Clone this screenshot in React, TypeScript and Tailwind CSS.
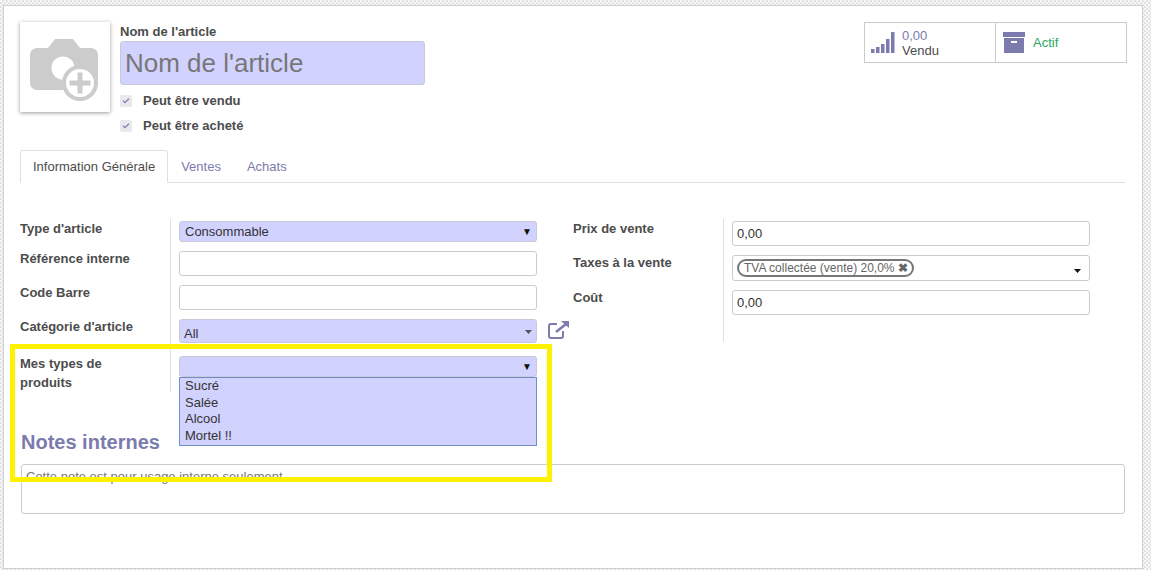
import { Check } from 'lucide-react'

const font = { fontFamily: '"Liberation Sans", Arial, sans-serif' }

function Caret({ color = '#000' }: { color?: string }) {
    return (
        <svg width="7" height="4" viewBox="0 0 7 4" className="shrink-0 block">
            <path d="M0 0h7L3.5 4z" fill={color} />
        </svg>
    )
}

function NativeSelect({ text, h }: { text?: string; h: string }) {
    return (
        <div className={`${h} w-[358px] flex items-center justify-between bg-[#d2d2ff] border border-[#c8c8d8] rounded-[3px] pl-[5px] pr-[4px] text-[#333]`}>
            <span>{text}</span>
            <span className="text-[10px] leading-none text-[#111]">▼</span>
        </div>
    )
}

function TextField({ value, h, w = 'w-[358px]' }: { value?: string; h: string; w?: string }) {
    return (
        <div className={`${h} ${w} flex items-center bg-white border border-[#ccc] rounded-[3px] px-[4px] text-[#333]`}>
            {value}
        </div>
    )
}

function FieldLabel({ children, width = 'w-[150px]' }: { children: React.ReactNode; width?: string }) {
    return <div className={`${width} shrink-0 font-bold text-[#4c4c4c] leading-[19px]`}>{children}</div>
}

function CheckRow({ label }: { label: string }) {
    return (
        <div className="h-[25px] flex items-center">
            <span className="w-[12px] h-[12px] rounded-[2px] bg-[#e7e9ed] flex items-center justify-center">
                <Check size={8} strokeWidth={3.5} color="#7c7bad" />
            </span>
            <span className="ml-[11px] font-bold text-[#4c4c4c]">{label}</span>
        </div>
    )
}

export default function App() {
    return (
        <div className="relative w-[1151px] h-[570px] overflow-hidden pt-[5px] pl-[3px] text-[13px] bg-[repeating-conic-gradient(#e2e2e2_0_25%,#f7f7f7_0_50%)] bg-[length:4px_4px]" style={font}>
            <div className="w-[1140px] h-[564px] bg-white border border-[#cfcfd8] pt-[16px] pl-[16px] pr-[15px]">
                {/* header */}
                <div className="flex items-start h-[116px]">
                    <div className="w-[90px] h-[90px] bg-white shadow-[0_1px_4px_rgba(0,0,0,0.4)] flex items-center justify-center">
                        <svg width="70" height="66" viewBox="0 0 70 66" className="overflow-visible">
                            <path d="M7 14h11l7-9h18l7 9h11a7 7 0 0 1 7 7v28a7 7 0 0 1-7 7H7a7 7 0 0 1-7-7V21a7 7 0 0 1 7-7z" fill="#ccc" />
                            <circle cx="33" cy="34" r="11.5" fill="#fff" />
                            <circle cx="50" cy="49" r="18" fill="#ccc" />
                            <circle cx="50" cy="49" r="14" fill="#fff" />
                            <path d="M47.5 38.5h5v8h8v5h-8v8h-5v-8h-8v-5h8z" fill="#ccc" />
                        </svg>
                    </div>
                    <div className="ml-[10px] w-[305px]">
                        <div className="font-bold text-[#4c4c4c] leading-[19px]">Nom de l'article</div>
                        <div className="h-[44px] flex items-center bg-[#d2d2ff] border border-[#c8c8d8] rounded-[3px] px-[4px] text-[26px] text-[#777]">Nom de l'article</div>
                        <div className="mt-[3px]">
                            <CheckRow label="Peut être vendu" />
                            <CheckRow label="Peut être acheté" />
                        </div>
                    </div>
                    <div className="ml-auto w-[263px] h-[41px] flex border border-[#ccc]">
                        <div className="w-[131px] border-r border-[#ccc] flex items-center pl-[6px]">
                            <svg width="24" height="21" viewBox="0 0 24 21" fill="#7c7bad">
                                <rect x="0" y="17" width="3.5" height="4" />
                                <rect x="5" y="15" width="3.5" height="6" />
                                <rect x="10" y="12" width="3.5" height="9" />
                                <rect x="15" y="7" width="3.5" height="14" />
                                <rect x="20" y="0" width="3.5" height="21" />
                            </svg>
                            <div className="ml-[7px] leading-[15px]">
                                <div className="text-[#7c7bad]">0,00</div>
                                <div className="text-[#4c4c4c]">Vendu</div>
                            </div>
                        </div>
                        <div className="flex-1 flex items-center pl-[7px]">
                            <svg width="22" height="21" viewBox="0 0 22 21" fill="#7c7bad">
                                <rect x="0" y="0" width="22" height="5" />
                                <path fillRule="evenodd" d="M1 6h20v15H1zM8 9v2h6V9z" />
                            </svg>
                            <span className="ml-[8px] text-[#28a862]">Actif</span>
                        </div>
                    </div>
                </div>

                {/* tabs */}
                <div className="mt-[12px] flex h-[33px] w-[1105px] border-b border-[#dee0e6]">
                    <div className="h-[33px] px-[12px] flex items-center bg-white border border-[#dee0e6] border-b-white rounded-t-[3px] text-[#4c4c4c]">Information Générale</div>
                    <div className="h-[33px] px-[13px] flex items-center text-[#7c7bad]">Ventes</div>
                    <div className="h-[33px] px-[13px] flex items-center text-[#7c7bad]">Achats</div>
                </div>

                {/* form */}
                <div className="mt-[36px] flex">
                    <div className="w-[553px] shrink-0">
                        <div className="flex h-[30px]">
                            <FieldLabel>Type d'article</FieldLabel>
                            <div className="border-l border-[#dee0e6] pl-[8px] pt-[2px]"><NativeSelect text="Consommable" h="h-[21px]" /></div>
                        </div>
                        <div className="flex h-[34px]">
                            <FieldLabel>Référence interne</FieldLabel>
                            <div className="border-l border-[#dee0e6] pl-[8px] pt-[2px]"><TextField h="h-[25px]" /></div>
                        </div>
                        <div className="flex h-[34px]">
                            <FieldLabel>Code Barre</FieldLabel>
                            <div className="border-l border-[#dee0e6] pl-[8px] pt-[2px]"><TextField h="h-[25px]" /></div>
                        </div>
                        <div className="flex h-[37px]">
                            <FieldLabel>Catégorie d'article</FieldLabel>
                            <div className="flex items-start border-l border-[#dee0e6] pl-[8px] pt-[2px]">
                                <div className="relative h-[24px] w-[358px] bg-[#d2d2ff] border border-[#c8c8d8] rounded-[3px] pl-[4px] pt-[5px] leading-[18px] text-[#333]">
                                    <span>All</span>
                                    <span className="absolute right-[4px] top-[10px]"><Caret color="#555" /></span>
                                </div>
                                <svg width="21" height="18" viewBox="0 0 21 18" fill="none" stroke="#7c7bad" strokeWidth="2" className="ml-[11px] mt-[2px]">
                                    <path d="M9 3H3a2 2 0 0 0-2 2v10a2 2 0 0 0 2 2h10a2 2 0 0 0 2-2v-5" />
                                    <path d="M8 11 18 3" strokeWidth="2.6" />
                                    <path d="M13 0h8v7z" fill="#7c7bad" stroke="none" />
                                </svg>
                            </div>
                        </div>
                        <div className="flex h-[38px]">
                            <FieldLabel><div className="w-[110px]">Mes types de produits</div></FieldLabel>
                            <div className="relative border-l border-[#dee0e6] pl-[8px] pt-[2px]">
                                <NativeSelect h="h-[21px]" />
                                <div className="absolute z-10 left-[8px] top-[23px] w-[358px] h-[69px] bg-[#d2d2ff] border border-[#6f8fca] pl-[5px] text-[#333] leading-[16.7px]">
                                    <div>Sucré</div>
                                    <div>Salée</div>
                                    <div>Alcool</div>
                                    <div>Mortel !!</div>
                                </div>
                            </div>
                        </div>
                    </div>
                    <div className="flex-1">
                        <div className="flex h-[34px]">
                            <FieldLabel>Prix de vente</FieldLabel>
                            <div className="border-l border-[#dee0e6] pl-[8px] pt-[2px]"><TextField value="0,00" h="h-[25px]" /></div>
                        </div>
                        <div className="flex h-[35px]">
                            <FieldLabel>Taxes à la vente</FieldLabel>
                            <div className="border-l border-[#dee0e6] pl-[8px] pt-[2px]">
                                <div className="h-[26px] w-[358px] flex justify-between bg-white border border-[#ccc] rounded-[3px] pl-[4px] pr-[8px]">
                                    <div className="mt-[3px] h-[18px] flex items-center gap-[3px] border-2 border-[#777] rounded-full pl-[5px] pr-[4px] text-[12px] text-[#666]">
                                        TVA collectée (vente) 20,0%
                                        <span className="font-bold text-[12px] leading-none">✖</span>
                                    </div>
                                    <span className="mt-[13px]"><Caret color="#111" /></span>
                                </div>
                            </div>
                        </div>
                        <div className="flex h-[54px]">
                            <FieldLabel>Coût</FieldLabel>
                            <div className="border-l border-[#dee0e6] pl-[8px] pt-[2px]"><TextField value="0,00" h="h-[25px]" /></div>
                        </div>
                    </div>
                </div>

                {/* notes */}
                <h3 className="mt-[38px] ml-px h-[24px] leading-[24px] text-[20px] font-bold text-[#7c7bad]">Notes internes</h3>
                <div className="mt-[10px] ml-px w-[1104px] h-[50px] border border-[#ccc] rounded-[3px] px-[4px] pt-[4px] leading-[15px] text-[#777]">
                    Cette note est pour usage interne seulement
                </div>
            </div>

            {/* yellow highlight drawn over the screenshot */}
            <div className="absolute z-20 left-[10px] top-[344px] w-[542px] h-[138px] border-[5px] border-[#fff200]" />
        </div>
    )
}
